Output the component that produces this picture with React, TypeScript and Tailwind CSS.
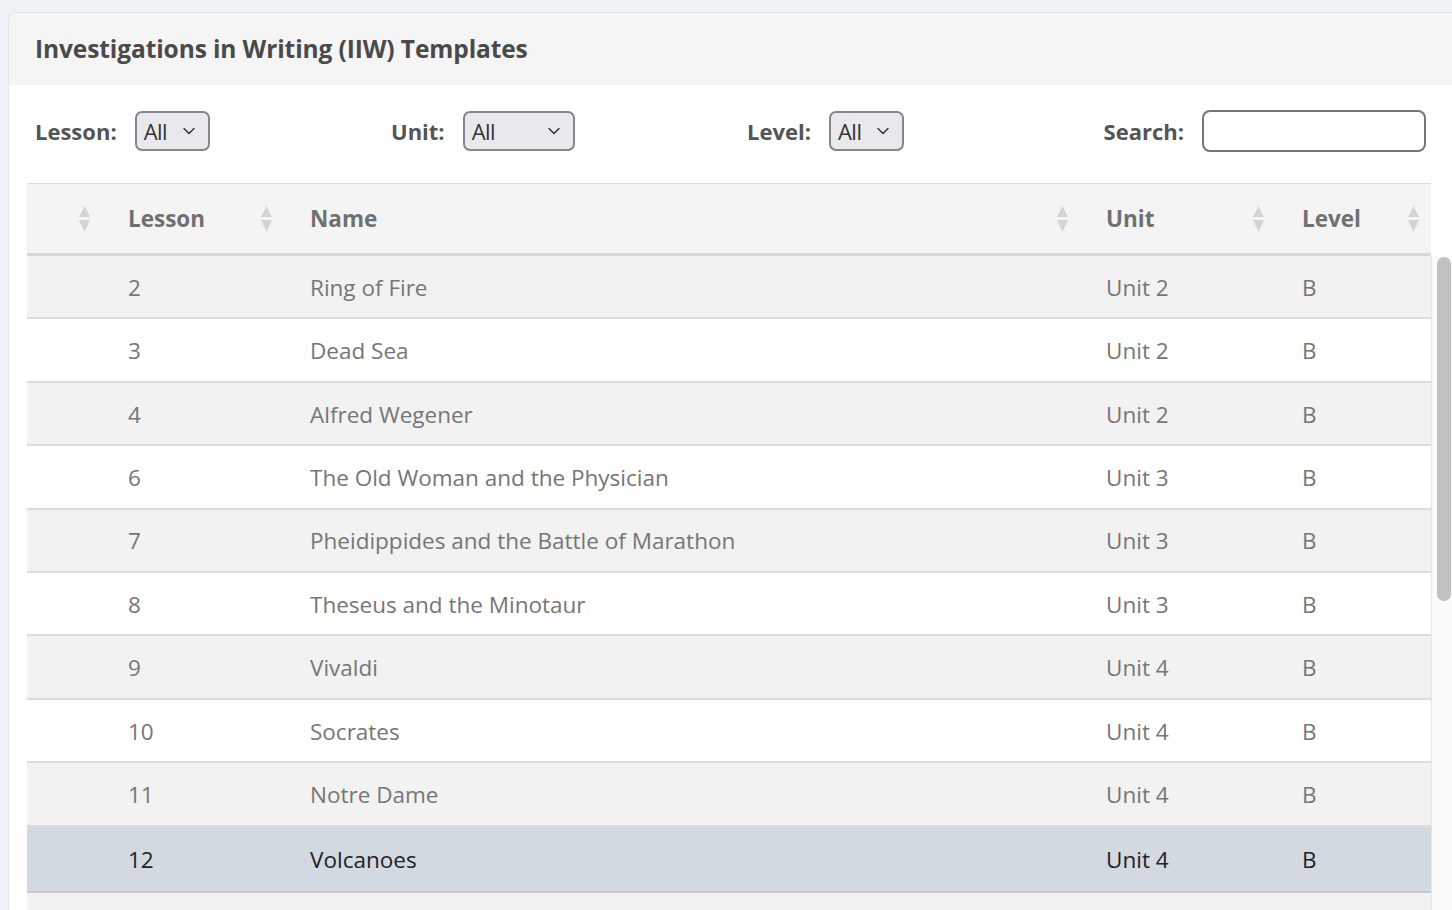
import React from 'react';
import { ChevronDown } from 'lucide-react';

type Row = { lesson: string; name: string; unit: string; level: string; selected?: boolean };

const ROWS: Row[] = [
  { lesson: '2', name: 'Ring of Fire', unit: 'Unit 2', level: 'B' },
  { lesson: '3', name: 'Dead Sea', unit: 'Unit 2', level: 'B' },
  { lesson: '4', name: 'Alfred Wegener', unit: 'Unit 2', level: 'B' },
  { lesson: '6', name: 'The Old Woman and the Physician', unit: 'Unit 3', level: 'B' },
  { lesson: '7', name: 'Pheidippides and the Battle of Marathon', unit: 'Unit 3', level: 'B' },
  { lesson: '8', name: 'Theseus and the Minotaur', unit: 'Unit 3', level: 'B' },
  { lesson: '9', name: 'Vivaldi', unit: 'Unit 4', level: 'B' },
  { lesson: '10', name: 'Socrates', unit: 'Unit 4', level: 'B' },
  { lesson: '11', name: 'Notre Dame', unit: 'Unit 4', level: 'B' },
  { lesson: '12', name: 'Volcanoes', unit: 'Unit 4', level: 'B', selected: true },
];

const GRID = 'grid grid-cols-[73px_182px_796px_196px_157px]';

const SortIcon = () => (
  <svg width="11" height="26" viewBox="0 0 11 26" className="shrink-0">
    <path d="M5.5 0 L11 11 L0 11 Z" fill="#d4d4d4" />
    <path d="M0 14 L11 14 L5.5 26 Z" fill="#d4d4d4" />
  </svg>
);

const Select = ({ width }: { width: string }) => (
  <div
    className={`${width} h-[40px] flex items-center justify-between pl-[7px] pr-[9px] bg-[#e9e9ed] border-2 border-[#85858d] rounded-[7px] text-[22px] text-[#333]`}
  >
    <span className="tracking-[-0.5px]">All</span>
    <ChevronDown size={20} strokeWidth={1.75} className="text-[#333]" />
  </div>
);

const Filter = ({ label, width, className = '' }: { label: string; width: string; className?: string }) => (
  <div className={`flex items-center gap-[18px] ${className}`}>
    <span className="text-[22px] font-bold text-[#555]">{label}</span>
    <Select width={width} />
  </div>
);

const HeadCell = ({ label, last = false }: { label?: string; last?: boolean }) => (
  <div className={`flex items-center justify-between pl-[28px] ${last ? 'pr-[12px]' : 'pr-[10px]'}`}>
    <span className="text-[22.5px] font-bold text-[#707070]">{label}</span>
    <SortIcon />
  </div>
);

export default function App() {
  return (
    <div className="h-[910px] overflow-hidden bg-[#eef1f6] pt-[12px] pl-[8px]" style={{ fontFamily: '"Open Sans", "Noto Sans", sans-serif' }}>
      <div className="w-[1444px] h-[898px] bg-white rounded-tl-[8px] border-l border-t border-[#e3e5e9] overflow-hidden flex flex-col">
        {/* Card header */}
        <div className="h-[72px] shrink-0 bg-[#f5f5f5] flex items-center pl-[26px]">
          <h1 className="text-[24.5px] font-bold text-[#4a4a4a] tracking-[-0.1px]">Investigations in Writing (IIW) Templates</h1>
        </div>

        {/* Filters */}
        <div className="flex items-center pl-[26px] pr-[26px] pt-[24px] h-[68px] shrink-0">
          <Filter label="Lesson:" width="w-[75px]" className="w-[356px]" />
          <Filter label="Unit:" width="w-[112px]" className="w-[356px]" />
          <Filter label="Level:" width="w-[75px]" className="w-[356px]" />
          <div className="ml-auto flex items-center gap-[18px]">
            <span className="text-[22px] font-bold text-[#555]">Search:</span>
            <div className="w-[224px] h-[42px] bg-white border-2 border-[#75757d] rounded-[8px]" />
          </div>
        </div>

        {/* Table */}
        <div className="mt-[30px] pl-[18px] flex flex-col flex-1 min-h-0">
          <div className={`${GRID} w-[1404px] h-[73px] shrink-0 bg-[#f4f4f4] border-t border-[#dedede] border-b-[3px] border-b-[#d6d6d6]`}>
            <HeadCell />
            <HeadCell label="Lesson" />
            <HeadCell label="Name" />
            <HeadCell label="Unit" />
            <HeadCell label="Level" last />
          </div>
          <div className="flex flex-1 min-h-0">
            <div className="w-[1404px] overflow-hidden">
              {ROWS.map((r, i) => (
                <div
                  key={r.lesson}
                  className={`${GRID} h-[63.4px] items-center text-[22.5px] pt-[2px] ${
                    r.selected
                      ? 'bg-[#d3d9e1] text-[#222] h-[66px] border-b-2 border-[#c9c9c9]'
                      : `${i % 2 === 0 ? 'bg-[#f2f2f2]' : 'bg-white'} text-[#767676] border-b-2 border-[#dcdcdc]`
                  }`}
                >
                  <div />
                  <div className="pl-[28px]">{r.lesson}</div>
                  <div className="pl-[28px]">{r.name}</div>
                  <div className="pl-[28px]">{r.unit}</div>
                  <div className="pl-[28px]">{r.level}</div>
                </div>
              ))}
              <div className="h-[64px] bg-[#f2f2f2]" />
            </div>
            {/* Scrollbar */}
            <div className="w-[21px] bg-[#fafafa] border-l border-[#e6e6e6] pl-[5px] pr-[1px] pt-[1px]">
              <div className="h-[344px] bg-[#c1c1c1] rounded-full" />
            </div>
          </div>
        </div>
      </div>
    </div>
  );
}
